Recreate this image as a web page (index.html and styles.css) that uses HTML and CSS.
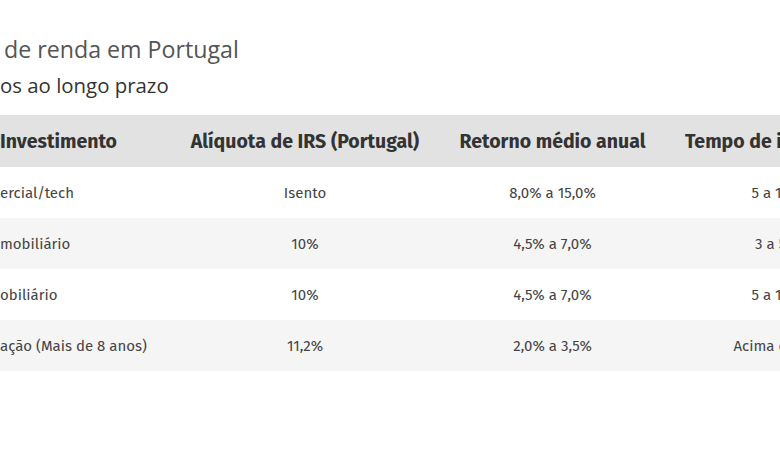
FILE: index.html
```html
<!DOCTYPE html>
<html lang="pt">
<head>
<meta charset="utf-8">
<link rel="stylesheet" href="styles.css">
</head>
<body>
<div class="page">
  <h1 class="title">de renda em Portugal</h1>
  <h2 class="subtitle">os ao longo prazo</h2>
  <table class="grid">
    <colgroup>
      <col class="c1"><col class="c2"><col class="c3"><col class="c4">
    </colgroup>
    <thead>
      <tr><th class="left">Investimento</th><th>Alíquota de IRS (Portugal)</th><th>Retorno médio anual</th><th>Tempo de investimento</th></tr>
    </thead>
    <tbody>
      <tr><td class="left">ercial/tech</td><td>Isento</td><td>8,0% a 15,0%</td><td>5 a 10 anos</td></tr>
      <tr class="alt"><td class="left">mobiliário</td><td>10%</td><td>4,5% a 7,0%</td><td>3 a 5 anos</td></tr>
      <tr><td class="left">obiliário</td><td>10%</td><td>4,5% a 7,0%</td><td>5 a 10 anos</td></tr>
      <tr class="alt"><td class="left">ação (Mais de 8 anos)</td><td>11,2%</td><td>2,0% a 3,5%</td><td>Acima de 8 anos</td></tr>
    </tbody>
  </table>
</div>
</body>
</html>
```
FILE: styles.css
```css
html, body {
  margin: 0;
  padding: 0;
  background: #ffffff;
  overflow: hidden;
}
.page {
  width: 898px;
  padding-top: 34px;
  font-family: "Fira Sans", "Open Sans", "Noto Sans", sans-serif;
}
.title {
  margin: 0;
  padding-left: 4px;
  font-family: "Open Sans", "Noto Sans", sans-serif;
  font-weight: 400;
  font-size: 23.2px;
  line-height: 30px;
  color: #555555;
}
.subtitle {
  margin: 7px 0 0 0;
  font-family: "Open Sans", "Noto Sans", sans-serif;
  font-weight: 400;
  font-size: 20.4px;
  line-height: 28px;
  color: #333333;
}
.grid {
  margin-top: 16px;
  border-collapse: collapse;
  table-layout: fixed;
  width: 898px;
}
.c1 { width: 185px; }
.c2 { width: 240px; }
.c3 { width: 255px; }
.c4 { width: 218px; }
.grid th {
  background: #e2e2e2;
  height: 52px;
  padding: 0;
  font-size: 19.5px;
  font-weight: 700;
  color: #333333;
  text-align: center;
  white-space: nowrap;
}
.grid td {
  height: 51px;
  padding: 0;
  font-size: 15px;
  color: #444444;
  text-align: center;
  white-space: nowrap;
}
.grid .left { text-align: left; }
.grid tr.alt td { background: #f5f5f5; }
```
